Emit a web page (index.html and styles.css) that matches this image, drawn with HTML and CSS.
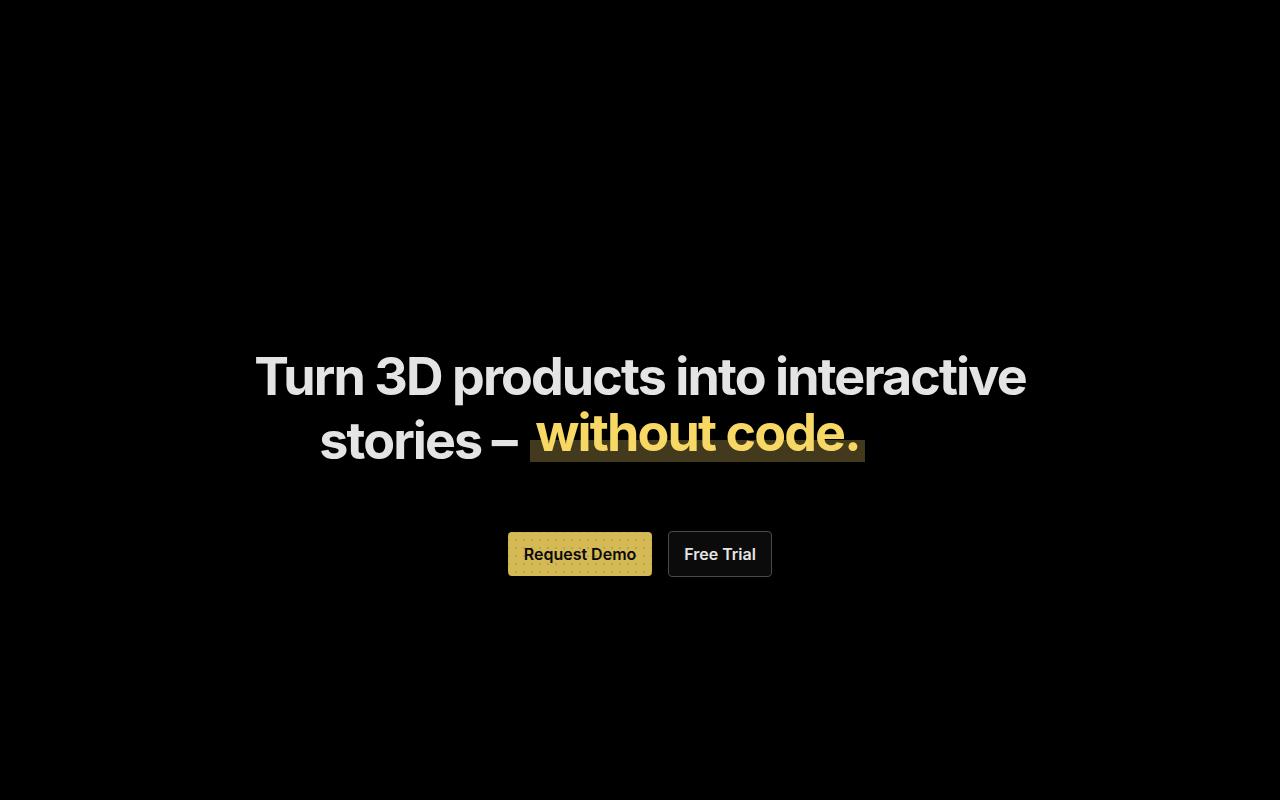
FILE: index.html
```html
<!DOCTYPE html>
<html lang="en">
<head>
<meta charset="utf-8">
<title>Hero</title>
<link rel="stylesheet" href="styles.css">
</head>
<body>
<main class="hero">
  <h1 class="headline">
    <span class="line">Turn 3D products into interactive</span>
    <span class="line line-two">stories – <span class="highlight"><span class="highlight-text">without code.</span></span></span>
  </h1>
  <div class="actions">
    <a class="btn btn-primary" href="#">Request Demo</a>
    <a class="btn btn-secondary" href="#">Free Trial</a>
  </div>
</main>
</body>
</html>
```

FILE: styles.css
```css
* { box-sizing: border-box; }
html, body {
  margin: 0;
  padding: 0;
  background: #000;
  height: 100%;
}
body {
  font-family: Inter, "Liberation Sans", sans-serif;
  color: #e5e5e5;
}
.hero {
  height: 800px;
  display: flex;
  flex-direction: column;
  align-items: center;
  justify-content: center;
  padding-top: 122px;
}
.headline {
  margin: 0;
  font-size: 52px;
  font-weight: 700;
  line-height: 64px;
  letter-spacing: -1.9px;
  text-align: center;
  color: #e4e4e4;
}
.line { display: block; white-space: nowrap; }
.line-two {
  padding-right: 96px;
}
.highlight {
  display: inline-block;
  position: relative;
  padding: 0 5px;
  margin-left: 4px;
}
.highlight::before {
  content: "";
  position: absolute;
  left: 0;
  right: 0;
  bottom: 11px;
  height: 22px;
  background: #433a1d;
}
.highlight-text {
  position: relative;
  display: inline-block;
  color: #f7d865;
  transform: translateY(-8px);
}
.actions {
  display: flex;
  gap: 16px;
  margin-top: 58px;
  align-items: center;
}
.btn {
  display: inline-flex;
  align-items: center;
  justify-content: center;
  height: 44px;
  padding: 0;
  font-size: 16px;
  font-weight: 600;
  white-space: nowrap;
  text-decoration: none;
  border-radius: 4px;
}
.btn-primary {
  width: 144px;
  color: #0a0a0a;
  background-color: #d4b955;
  background-image: radial-gradient(circle, #bca44a 1px, transparent 1.2px);
  background-size: 8px 8px;
  background-position: 4px 4px;
}
.btn-secondary {
  width: 104px;
  height: 46px;
  color: #e5e5e5;
  background: #0b0b0b;
  border: 1px solid #4a4a4a;
}
```
